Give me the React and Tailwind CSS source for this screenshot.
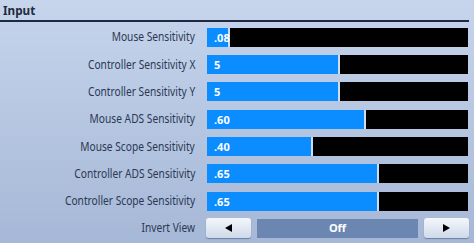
import React from "react";

const rows = [
  { label: "Mouse Sensitivity", value: ".08", pct: 8 },
  { label: "Controller Sensitivity X", value: "5", pct: 50 },
  { label: "Controller Sensitivity Y", value: "5", pct: 50 },
  { label: "Mouse ADS Sensitivity", value: ".60", pct: 60 },
  { label: "Mouse Scope Sensitivity", value: ".40", pct: 40 },
  { label: "Controller ADS Sensitivity", value: ".65", pct: 65 },
  { label: "Controller Scope Sensitivity", value: ".65", pct: 65 },
];

function Label({ children }) {
  return (
    <div className="w-[195px] flex justify-end">
      <span className="block text-[12px] text-[#2b3853] whitespace-nowrap leading-none scale-x-[0.85] origin-right">
        {children}
      </span>
    </div>
  );
}

function Row({ label, value, pct }) {
  return (
    <div className="flex items-center h-[19px]">
      <Label>{label}</Label>
      <div className="ml-[12px] flex h-full w-[261px]">
        <div
          className="relative h-full bg-[#0b8cff] flex items-center"
          style={{ width: `${pct}%` }}
        >
          <span className="absolute left-[7px] text-[11px] font-bold text-white leading-none">
            {value}
          </span>
        </div>
        <div className="h-full w-[2px] bg-[#cfdcef]" />
        <div className="h-full flex-1 bg-black" />
      </div>
    </div>
  );
}

function ArrowButton({ dir }) {
  return (
    <div className="w-[45px] h-[20px] rounded-[3px] bg-gradient-to-b from-[#f4f7fc] to-[#cfd9e9] shadow-[0_1px_1px_rgba(40,60,100,0.45)] flex items-center justify-center">
      <svg width="7" height="8" viewBox="0 0 7 8">
        {dir === "left" ? (
          <polygon points="7,0 7,8 0,4" fill="#000" />
        ) : (
          <polygon points="0,0 0,8 7,4" fill="#000" />
        )}
      </svg>
    </div>
  );
}

export default function App() {
  return (
    <div
      className="w-[474px] h-[243px] overflow-hidden bg-gradient-to-b from-[#c6d5ec] to-[#a6b8d7]"
      style={{ fontFamily: '"Noto Sans", "Open Sans", sans-serif' }}
    >
      <div className="pl-[3px] pt-[1px] h-[20px] leading-[17px]">
        <span className="inline-block text-[13px] font-bold text-[#1f2a3d] scale-x-[0.9] origin-left">
          Input
        </span>
      </div>
      <div className="w-[469px] h-[2px] bg-[#1f2a40]" />
      <div className="flex flex-col gap-[8.33px] pt-[5.7px]">
        {rows.map((r) => (
          <Row key={r.label} {...r} />
        ))}
        <div className="flex items-center h-[20px] mt-[-1px]">
          <Label>Invert View</Label>
          <div className="ml-[11px] flex gap-[6px]">
            <ArrowButton dir="left" />
            <div className="w-[161px] h-[19px] mt-[1px] bg-[#6b86b0] flex items-center justify-center text-[11px] font-bold text-white">
              Off
            </div>
            <ArrowButton dir="right" />
          </div>
        </div>
      </div>
    </div>
  );
}
